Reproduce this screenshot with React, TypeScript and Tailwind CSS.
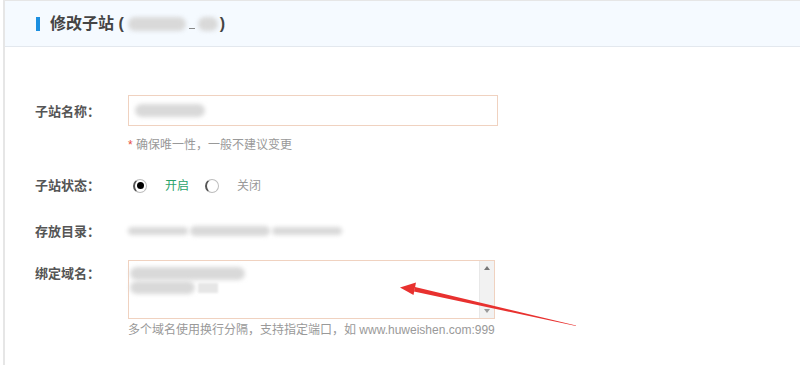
import React from 'react'

const font = { fontFamily: "'Liberation Sans', 'Noto Sans CJK SC', sans-serif" }

function Blur({ className }: { className: string }) {
  return <span className={`block rounded-full bg-[#d9d9d9] blur-[2px] ${className}`} />
}

function Radio({ checked }: { checked?: boolean }) {
  return (
    <span className="relative flex h-[14px] w-[14px] items-center justify-center rounded-full border border-[#bdbdbd] border-l-2 border-l-[#555] bg-white">
      {checked && <span className="h-[7px] w-[7px] rounded-full bg-black" />}
    </span>
  )
}

function Row({ label, children, className = '' }: { label: string; children: React.ReactNode; className?: string }) {
  return (
    <div className={`flex ${className}`}>
      <div className="w-[93px] shrink-0 text-[13px] font-bold text-[#555]">{label}</div>
      <div className="flex-1">{children}</div>
    </div>
  )
}

export default function App() {
  return (
    <div className="relative h-[365px] w-[800px] overflow-hidden bg-white" style={font}>
      <div className="ml-[3px] h-full border-l-2 border-t border-[#e6e6e6]">
        <div className="flex h-[46px] items-center border-b border-[#e3e8ee] bg-[#f5faff] pl-[31px]">
          <span className="mr-[10px] h-[14px] w-[4px] bg-[#1c8fe0]" />
          <span className="text-[16px] font-bold text-[#444]">修改子站 (</span>
          <span className="ml-[4px] flex h-[16px] w-[90px] items-center gap-[3px]">
            <Blur className="h-[14px] w-[58px] rounded-[4px]" />
            <span className="mt-[10px] h-[1px] w-[6px] bg-[#888]" />
            <Blur className="h-[14px] w-[20px]" />
          </span>
          <span className="ml-[2px] text-[16px] font-bold text-[#444]">)</span>
        </div>

        <div className="pl-[30px] pt-[55px]">
          <Row label="子站名称：" className="items-start">
            <div className="-mt-[7px] flex h-[31px] w-[370px] items-center border border-[#f0d2c0] bg-white pl-[6px]">
              <Blur className="h-[13px] w-[70px] rounded-[5px]" />
            </div>
            <div className="mt-[10px] text-[12px] text-[#999]">
              <span className="text-[#e74c3c]">*</span> 确保唯一性，一般不建议变更
            </div>
          </Row>

          <Row label="子站状态：" className="mt-[22px] items-center">
            <div className="flex items-center text-[12px]">
              <span className="ml-[5px]"><Radio checked /></span>
              <span className="ml-[18px] text-[#2aa36b]">开启</span>
              <span className="ml-[16px]"><Radio /></span>
              <span className="ml-[18px] text-[#999]">关闭</span>
            </div>
          </Row>

          <Row label="存放目录：" className="mt-[26px] items-center">
            <div className="flex h-[16px] w-[215px] items-center gap-[2px]">
              <Blur className="h-[8px] w-[60px]" />
              <Blur className="h-[10px] w-[80px]" />
              <Blur className="h-[8px] w-[70px]" />
            </div>
          </Row>

          <Row label="绑定域名：" className="mt-[23px] items-start">
            <div className="-mt-[4px] flex h-[59px] w-[367px] border border-[#f0d2c0] bg-white">
              <div className="flex-1 pl-[1px] pt-[6px]">
                <Blur className="h-[13px] w-[115px] rounded-[5px]" />
                <div className="mt-[1px] flex items-center">
                  <Blur className="h-[13px] w-[65px] rounded-[5px]" />
                  <span className="ml-[3px] h-[10px] w-[20px] bg-[#e6e6e6] blur-[1px]" />
                </div>
              </div>
              <div className="flex w-[15px] flex-col items-center justify-between border-l border-[#e8e8e8] bg-[#f2f2f2] py-[5px]">
                <span className="h-0 w-0 border-x-[3px] border-b-[4px] border-x-transparent border-b-[#777]" />
                <span className="h-0 w-0 border-x-[3px] border-t-[4px] border-x-transparent border-t-[#999]" />
              </div>
            </div>
            <div className="mt-[2px] text-[12px] text-[#999]">多个域名使用换行分隔，支持指定端口，如 www.huweishen.com:999</div>
          </Row>
        </div>
      </div>

      <svg className="absolute left-0 top-0" width="800" height="365" viewBox="0 0 800 365">
        <polygon points="576,326 414,291.5 415,287 576,325.5" fill="#e8312f" />
        <polygon points="400,287.5 416,282.5 413.5,295" fill="#e8312f" />
      </svg>
    </div>
  )
}
